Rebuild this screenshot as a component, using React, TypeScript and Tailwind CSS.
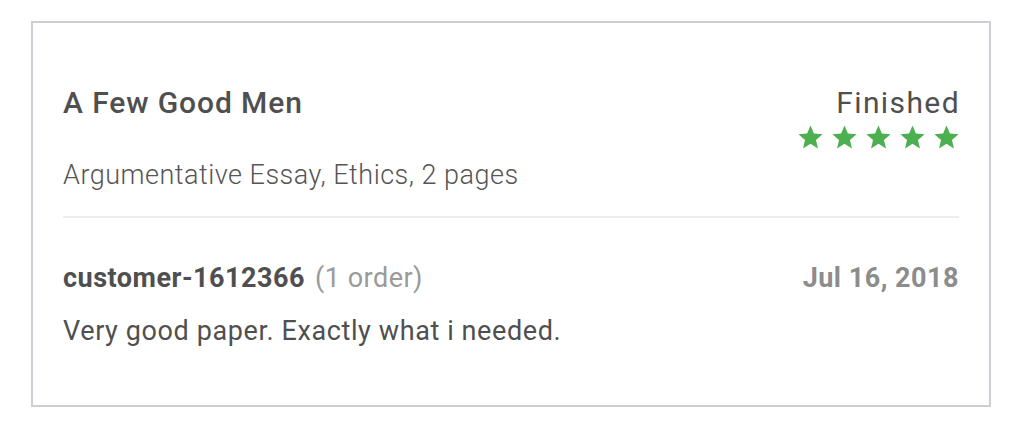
import React from "react";

const Star: React.FC = () => (
  <svg viewBox="0 0 24 24" className="w-[29px] h-[29px] fill-[#4caf50]">
    <path d="M12 17.27 18.18 21l-1.64-7.03L22 9.24l-7.19-.61L12 2 9.19 8.63 2 9.24l5.46 4.73L5.82 21z" />
  </svg>
);

const App: React.FC = () => {
  return (
    <div className="w-[1018px] h-[425px] bg-white pt-[21px] pl-[31px] font-['Roboto',sans-serif]">
      <div className="w-[960px] border-2 border-[#cdcdd5] px-[30px] pt-[62px] pb-[58px]">
        {/* Заголовок и статус */}
        <div className="flex justify-between items-start">
          <div>
            <h2 className="text-[30px] leading-[36px] tracking-[0.9px] font-medium text-[#4f4f4f]">
              A Few Good Men
            </h2>
            <p className="mt-[38px] text-[27px] leading-[32px] tracking-[0.5px] font-light text-[#555]">
              Argumentative Essay, Ethics, 2 pages
            </p>
          </div>
          <div className="flex flex-col items-end">
            <span className="text-[30px] leading-[36px] tracking-[1.4px] -mr-[1px] text-[#4f4f4f]">
              Finished
            </span>
            <div className="flex gap-[5px] mt-[2px] -mr-[2px]">
              <Star />
              <Star />
              <Star />
              <Star />
              <Star />
            </div>
          </div>
        </div>

        <div className="mt-[25px] h-[2px] bg-[#ededed]" />

        {/* Отзыв */}
        <div className="mt-[44px] flex justify-between items-start text-[27px] leading-[32px] tracking-[0.5px]">
          <div>
            <span className="font-bold text-[#4f4f4f]">customer-1612366</span>
            <span className="ml-[10px] text-[#9a9a9a]">(1 order)</span>
          </div>
          <span className="font-bold text-[#8c8c8c]">Jul 16, 2018</span>
        </div>
        <p className="mt-[21px] text-[27px] leading-[32px] tracking-[0.6px] text-[#4f4f4f]">
          Very good paper. Exactly what i needed.
        </p>
      </div>
    </div>
  );
};

export default App;
